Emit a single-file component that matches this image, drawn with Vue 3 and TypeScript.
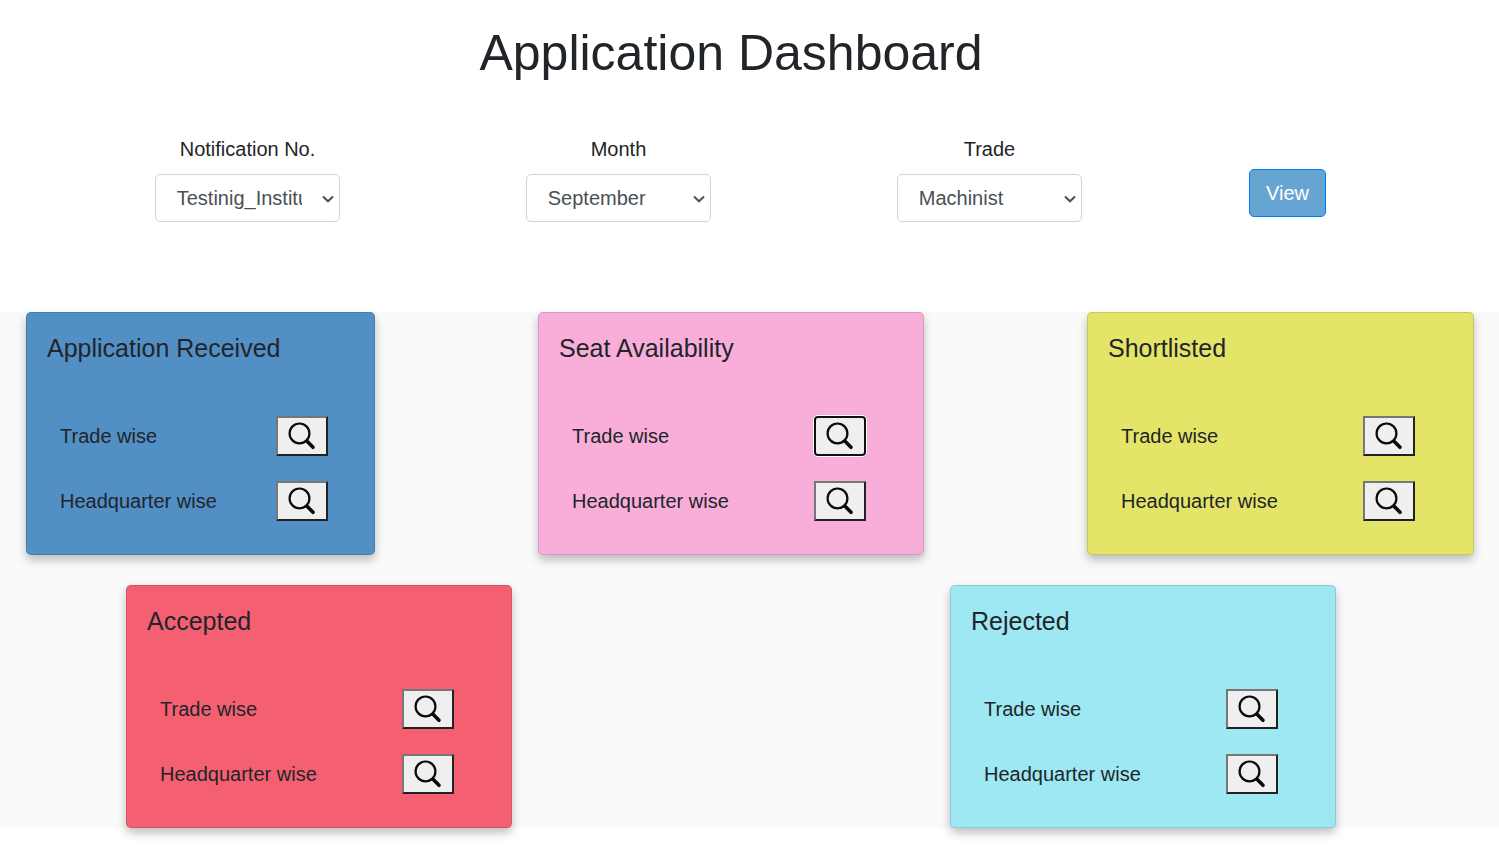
<script setup lang="ts">
import { ref } from 'vue'

interface Filter {
  id: string
  label: string
  options: string[]
}

interface Card {
  title: string
  tone: string
  focused?: string
}

const filters: Filter[] = [
  { id: 'notification', label: 'Notification No.', options: ['Testinig_Institute'] },
  { id: 'month', label: 'Month', options: ['September'] },
  { id: 'trade', label: 'Trade', options: ['Machinist'] },
]

const selected = ref<Record<string, string>>({
  notification: 'Testinig_Institute',
  month: 'September',
  trade: 'Machinist',
})

const rows: { name: string; cards: Card[] }[] = [
  {
    name: 'upper',
    cards: [
      { title: 'Application Received', tone: 'blue' },
      { title: 'Seat Availability', tone: 'pink', focused: 'Trade wise' },
      { title: 'Shortlisted', tone: 'yellow' },
    ],
  },
  {
    name: 'lower',
    cards: [
      { title: 'Accepted', tone: 'red' },
      { title: 'Rejected', tone: 'cyan' },
    ],
  },
]

const groupings = ['Trade wise', 'Headquarter wise']
</script>

<template>
  <main class="page">
    <header class="top">
      <h1>Application Dashboard</h1>
      <form class="filters" @submit.prevent>
        <div v-for="f in filters" :key="f.id" class="field">
          <label :for="f.id">{{ f.label }}</label>
          <div class="select-box">
            <select :id="f.id" v-model="selected[f.id]">
              <option v-for="o in f.options" :key="o" :value="o">{{ o }}</option>
            </select>
            <svg class="chevron" viewBox="0 0 12 8" aria-hidden="true">
              <path d="M1 1.5L6 6.3L11 1.5" />
            </svg>
          </div>
        </div>
        <div class="action">
          <button type="submit" class="view">View</button>
        </div>
      </form>
    </header>

    <section class="board">
      <div v-for="row in rows" :key="row.name" class="row" :class="row.name">
        <article v-for="card in row.cards" :key="card.title" class="card" :class="card.tone">
          <h2>{{ card.title }}</h2>
          <div v-for="g in groupings" :key="g" class="item">
            <span class="item-label">{{ g }}</span>
            <div class="item-action">
              <button
                type="button"
                class="search"
                :class="{ focused: card.focused === g }"
                :aria-label="`${card.title}, ${g}`"
              >
                <svg viewBox="0 0 48 36" aria-hidden="true">
                  <circle cx="21.5" cy="15.4" r="9.9" />
                  <path class="neck" d="M28 22.3L30 24.3" />
                  <path class="handle" d="M29.3 23.5L35 29.3" />
                </svg>
              </button>
            </div>
          </div>
        </article>
      </div>
    </section>
  </main>
</template>

<style>
body {
  margin: 0;
  background: #fff;
}
</style>

<style scoped>
.page,
.page * {
  box-sizing: border-box;
}

.page {
  min-height: 100vh;
  font-family: "Liberation Sans", Arial, sans-serif;
  font-size: 20px;
  line-height: 30px;
  color: #212529;
}

.top {
  padding: 23px 99px 90px 62px;
}

h1 {
  margin: 0 0 51px;
  font-size: 50px;
  font-weight: 400;
  line-height: 60px;
  text-align: center;
}

.filters {
  display: grid;
  grid-template-columns: repeat(3, 371fr) 225fr;
}

.field {
  display: flex;
  flex-direction: column;
  align-items: center;
  gap: 10px;
}

.select-box {
  position: relative;
  width: 50%;
}

select {
  display: block;
  width: 100%;
  height: 48px;
  margin: 0;
  padding: 0 37px 0 21px;
  appearance: none;
  border: 1px solid #ced4da;
  border-radius: 5px;
  background: #fff;
  color: #495057;
  font: inherit;
}

.chevron {
  position: absolute;
  top: 21px;
  right: 6px;
  width: 12px;
  height: 8px;
  fill: none;
  stroke: #495057;
  stroke-width: 2;
  pointer-events: none;
}

.action {
  display: flex;
  justify-content: center;
  align-items: flex-start;
  padding-top: 35px;
}

.view {
  height: 48px;
  padding: 0 16px;
  border: 1px solid #007bff;
  border-radius: 5px;
  background: #66a5d2;
  color: #fff;
  font: inherit;
}

.board {
  display: flex;
  flex-direction: column;
  gap: 30px;
  background: #fafafa;
}

.row {
  display: grid;
}

.upper {
  grid-template-columns: 349fr 386fr 387fr;
  column-gap: 163px;
  padding: 0 25px 0 26px;
}

.lower {
  grid-template-columns: 386fr 438fr 386fr;
  padding: 0 163px 0 126px;
}

.lower .card:last-child {
  grid-column: 3;
}

.card {
  padding: 20px 20px 21px;
  border: 1px solid rgba(0, 0, 0, 0.125);
  border-radius: 5px;
  box-shadow: 0 5px 10px rgba(0, 0, 0, 0.25);
}

.blue { background: #528fc5; }
.pink { background: #f8aed9; }
.yellow { background: #e4e568; }
.red { background: #f46072; }
.cyan { background: #9de8f3; }

h2 {
  margin: 0 0 40px;
  font-size: 25px;
  font-weight: 400;
  line-height: 30px;
}

.item {
  display: grid;
  grid-template-columns: 182fr 77fr;
  align-items: center;
  height: 65px;
}

.item-label,
.item-action {
  padding-left: 13px;
}

.item-action {
  display: flex;
}

.search {
  width: 52px;
  height: 40px;
  padding: 0;
  border: 2px solid;
  border-color: #767676 #212121 #212121 #767676;
  background: #efefef;
}

.search svg {
  display: block;
  width: 48px;
  height: 36px;
  fill: none;
  stroke: #0a0a0a;
}

.search circle {
  stroke-width: 2.2;
}

.search .neck {
  stroke-width: 2.4;
}

.search .handle {
  stroke-width: 3.6;
}

.search.focused {
  border-color: #101010;
  border-radius: 4px;
  box-shadow: 0 0 0 1px #fff;
}

.search .handle {
  stroke-linecap: round;
}
</style>
